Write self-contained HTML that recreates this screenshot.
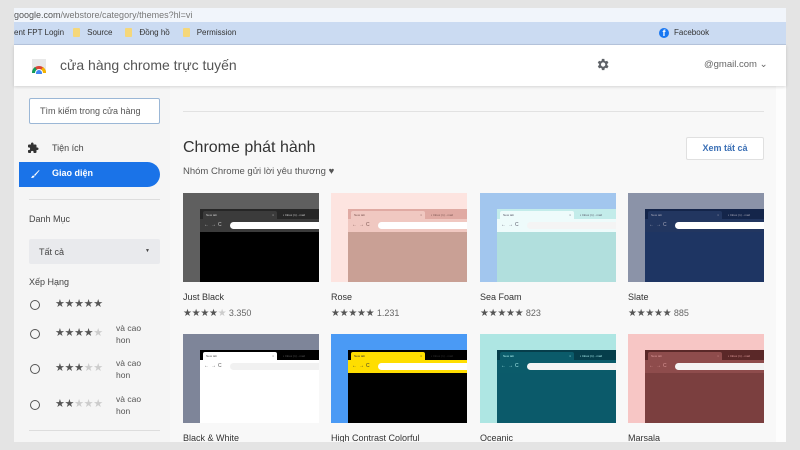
<!DOCTYPE html>
<html><head><meta charset="utf-8"><style>
*{box-sizing:border-box;margin:0;padding:0}
body{width:800px;height:450px;background:#e4e4e4;font-family:"Liberation Sans",sans-serif;position:relative;overflow:hidden}
.abs{position:absolute}
.addr{left:14px;top:8px;width:772px;height:14px;background:#f1f5fb;font-size:9px;color:#555;line-height:14px;padding-left:0}
.bm{left:14px;top:22px;width:772px;height:23px;background:#cbdbf2;border-bottom:1px solid #b8c8e0;font-size:8px;color:#333;line-height:22px}
.fold{display:inline-block;width:7px;height:9px;background:#f5d77a;vertical-align:middle;margin-right:7px;border-radius:1px}
.hdr{left:14px;top:45px;width:772px;height:41px;background:#fff;box-shadow:0 1px 3px rgba(0,0,0,.15);z-index:2}
.side{left:14px;top:86px;width:156px;height:356px;background:#f5f5f5}
.main{left:170px;top:86px;width:606px;height:356px;background:#f8f8f8}
.scr{left:776px;top:86px;width:10px;height:356px;background:#fdfdfd}
.card{position:absolute;width:136px}
.img{position:relative;width:136px;height:89px;overflow:hidden}
.win{position:absolute;left:17px;top:16px;right:0;bottom:0}
.strip{height:10px;position:relative}
.tab{position:absolute;left:3px;top:2px;width:74px;height:8px;border-radius:2px 2px 0 0;font-size:3px;padding:2px 3px}
.tab2{position:absolute;left:80px;top:2px;width:60px;height:8px;font-size:3px;padding:2px 3px}
.tb{height:13px;position:relative}
.omni{position:absolute;left:30px;top:3px;right:0;height:7px;border-radius:4px 0 0 4px}
.nav{position:absolute;left:4px;top:3px;font-size:5px;letter-spacing:2px}
.nm{font-size:9px;color:#333;margin-top:10px}
.st{font-size:9px;color:#666;margin-top:6px}
.st b{color:#555;font-weight:normal;font-size:10px;letter-spacing:-0.3px}
.st i{color:#ccc;font-style:normal}
.rad{position:absolute;width:10px;height:10px;border:1.2px solid #555;border-radius:50%}
.rs{position:absolute;font-size:11px;color:#555;letter-spacing:-0.3px}
.rs i{color:#ccc;font-style:normal}
.rt{position:absolute;font-size:8.5px;color:#555;line-height:12px}
</style></head><body>
<div class="abs addr">google.com<span style="color:#777">/webstore/category/themes?hl=vi</span></div>
<div class="abs bm"><span>ent FPT Login</span><span style="margin-left:9px" class="fold"></span>Source<span style="margin-left:13px" class="fold"></span>Đồng hồ<span style="margin-left:13px" class="fold"></span>Permission
<span class="abs" style="left:645px;top:6px;width:10px;height:10px;border-radius:50%;background:#1877f2;color:#fff;font-size:9px;line-height:11px;text-align:center;font-weight:bold">f</span><span class="abs" style="left:660px;top:0">Facebook</span></div>
<div class="abs hdr">
 <svg class="abs" style="left:17px;top:13px" width="16" height="16" viewBox="0 0 16 16"><rect x="1" y="1" width="14" height="14" fill="#e8e8e8"/><path d="M1 15 A7 7 0 0 1 15 15Z" fill="#db4437"/><path d="M8 15 L15 15 A7 7 0 0 0 12 9Z" fill="#f4b400"/><path d="M1 15 L8 15 L4 9 A7 7 0 0 0 1 15Z" fill="#0f9d58"/><circle cx="8" cy="15" r="3.5" fill="#4285f4" stroke="#fff" stroke-width="1"/></svg>
 <div class="abs" style="left:46px;top:12px;font-size:14px;color:#555">cửa hàng chrome trực tuyến</div>
 <svg class="abs" style="left:581px;top:12px" width="15" height="15" viewBox="0 0 24 24"><path fill="#5f6368" d="M19.4 13a7.5 7.5 0 0 0 0-2l2.1-1.6-2-3.5-2.5 1a7 7 0 0 0-1.7-1L15 3h-4l-.4 2.9a7 7 0 0 0-1.7 1l-2.5-1-2 3.5L6.6 11a7.5 7.5 0 0 0 0 2l-2.1 1.6 2 3.5 2.5-1a7 7 0 0 0 1.7 1L11 21h4l.4-2.9a7 7 0 0 0 1.7-1l2.5 1 2-3.5zM13 15.5a3.5 3.5 0 1 1 0-7 3.5 3.5 0 0 1 0 7z"/></svg>
 <div class="abs" style="left:690px;top:14px;font-size:9.5px;color:#666">@gmail.com ⌄</div>
</div>
<div class="abs side">
 <div class="abs" style="left:15px;top:12px;width:131px;height:26px;background:#fff;border:1px solid #9bb7d6;border-radius:2px;font-size:9px;color:#555;padding:7px 10px">Tìm kiếm trong cửa hàng</div>
 <svg class="abs" style="left:13px;top:56px" width="12" height="12" viewBox="0 0 24 24"><path fill="#333" d="M20.5 11H19V7a2 2 0 0 0-2-2h-4V3.5a2.5 2.5 0 0 0-5 0V5H4a2 2 0 0 0-2 2v3.8h1.5a2.7 2.7 0 0 1 0 5.4H2V20a2 2 0 0 0 2 2h3.8v-1.5a2.7 2.7 0 0 1 5.4 0V22H17a2 2 0 0 0 2-2v-4h1.5a2.5 2.5 0 0 0 0-5z"/></svg>
 <div class="abs" style="left:38px;top:57px;font-size:9px;color:#444">Tiện ích</div>
 <div class="abs" style="left:5px;top:76px;width:141px;height:25px;background:#1a73e8;border-radius:0 13px 13px 0"></div>
 <svg class="abs" style="left:16px;top:83px" width="10" height="10" viewBox="0 0 10 10"><path d="M9 1 L4 6 L5 7 L9.5 1.5Z M3.5 6.5 C2 6.5 2 8 1 9 C3 9 4.5 8.5 4.5 7.5Z" fill="#fff"/></svg>
 <div class="abs" style="left:38px;top:82px;font-size:9px;color:#fff;font-weight:bold">Giao diện</div>
 <div class="abs" style="left:15px;top:113px;width:131px;height:1px;background:#ddd"></div>
 <div class="abs" style="left:15px;top:128px;font-size:9px;color:#444">Danh Mục</div>
 <div class="abs" style="left:15px;top:153px;width:131px;height:25px;background:#e9eaed;border-radius:2px;font-size:9px;color:#444;padding:8px 10px">Tất cả<span style="position:absolute;right:10px;top:9px;font-size:5px">▼</span></div>
 <div class="abs" style="left:15px;top:191px;font-size:9px;color:#444">Xếp Hạng</div>
 <div class="rad" style="top:214px;left:16px"></div><div class="rs" style="top:211px;left:41px">★★★★★</div>
 <div class="rad" style="top:243px;left:16px"></div><div class="rs" style="top:240px;left:41px">★★★★<i>★</i></div><div class="rt" style="top:236px;left:102px">và cao<br>hon</div>
 <div class="rad" style="top:278px;left:16px"></div><div class="rs" style="top:275px;left:41px">★★★<i>★★</i></div><div class="rt" style="top:271px;left:102px">và cao<br>hon</div>
 <div class="rad" style="top:314px;left:16px"></div><div class="rs" style="top:311px;left:41px">★★<i>★★★</i></div><div class="rt" style="top:307px;left:102px">và cao<br>hon</div>
 <div class="abs" style="left:15px;top:344px;width:131px;height:1px;background:#ddd"></div>
</div>
<div class="abs main">
 <div class="abs" style="left:13px;top:25px;width:581px;height:1px;background:#e2e2e2"></div>
 <div class="abs" style="left:13px;top:53px;font-size:16px;color:#333">Chrome phát hành</div>
 <div class="abs" style="left:13px;top:80px;font-size:9.5px;color:#555">Nhóm Chrome gửi lời yêu thương ♥</div>
 <div class="abs" style="left:516px;top:51px;width:78px;height:23px;background:#fff;border:1px solid #e0e0e0;border-radius:2px;font-size:9px;color:#3a6fb5;font-weight:bold;text-align:center;line-height:21px">Xem tất cả</div>
</div>
<div class="abs scr"></div>

<div id="cards"></div>
<script>
var T=[
[183,193,"Just Black","#5f5f5f","#262626","#3b3b3b","#3b3b3b","#000","#fff","#ccc","★★★★<i>★</i> 3.350"],
[331,193,"Rose","#fde4e0","#e0aaa3","#f0c8c1","#f0c8c1","#c9a095","#fff","#7a5550","★★★★★ 1.231"],
[480,193,"Sea Foam","#a2c6ee","#c3ecea","#eefbfb","#eefbfb","#b1dfdd","#f4f4f4","#556","★★★★★ 823"],
[628,193,"Slate","#8b93a8","#14254a","#223660","#223660","#1e3563","#fff","#aab","★★★★★ 885"],
[183,334,"Black & White","#7e8599","#000","#fff","#fff","#fff","#f1f1f1","#555",""],
[331,334,"High Contrast Colorful","#4a9af5","#000","#ffde00","#ffde00","#000","#fff","#333",""],
[480,334,"Oceanic","#aee6e3","#063e4b","#0b5b6a","#0b5b6a","#0b5a6a","#f4f4f4","#aee",""],
[628,334,"Marsala","#f7c6c5","#5a2828","#8e4c4c","#8e4c4c","#7b3f3f","#f4f4f4","#d99",""]];
var h="";
T.forEach(function(t){
h+='<div class="card" style="left:'+t[0]+'px;top:'+t[1]+'px"><div class="img" style="background:'+t[3]+'"><div class="win" style="background:'+t[7]+'"><div class="strip" style="background:'+t[4]+'"><div class="tab" style="background:'+t[5]+';color:'+t[9]+'">New tab<span style="float:right">×</span></div><div class="tab2" style="color:'+t[9]+'">▪ Inbox (1) - mail</div></div><div class="tb" style="background:'+t[6]+'"><span class="nav" style="color:'+t[9]+'">←→C</span><div class="omni" style="background:'+t[8]+'"></div></div></div></div><div class="nm">'+t[2]+'</div>'+(t[10]?'<div class="st"><b>'+t[10].replace(' ','</b> ')+'</div>':'')+'</div>';
});
document.getElementById('cards').innerHTML=h;
</script>
<div class="abs" style="left:0;top:442px;width:800px;height:8px;background:#e4e4e4"></div>
</body></html>
